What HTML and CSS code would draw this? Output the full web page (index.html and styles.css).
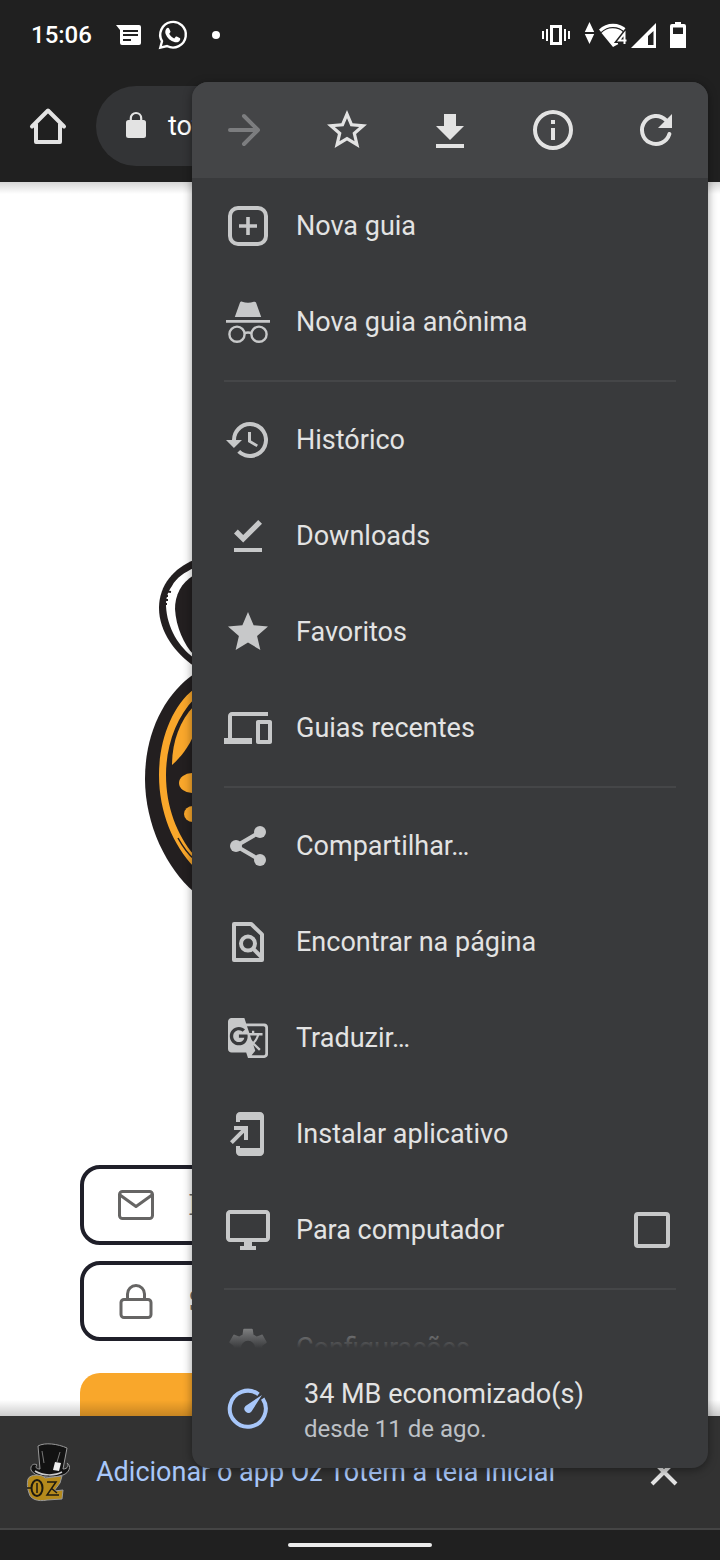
FILE: index.html
```html
<!DOCTYPE html>
<html lang="pt-BR">
<head>
<meta charset="utf-8">
<meta name="viewport" content="width=device-width, initial-scale=1">
<title>Oz Totem</title>
<link rel="stylesheet" href="styles.css">
</head>
<body>
<div class="screen">
  <header class="top">
    <div class="status">
      <span class="clock">15:06</span>
      <svg class="ic-msg" width="28" height="24" viewBox="0 0 28 24"><path fill="#fff" d="M0 2h23a2 2 0 0 1 2 2v16a2 2 0 0 1-2 2H6a2 2 0 0 1-2-2V7z"/><path stroke="#202020" stroke-width="2" d="M7 8h15M7 12h15M7 17h8"/></svg>
      <svg class="ic-wa" width="32" height="32" viewBox="0 0 32 32"><path fill="none" stroke="#fff" stroke-width="2.4" d="M3.3 28.7 5 22.2A12.8 12.8 0 1 1 10 27z"/><path fill="#fff" d="M9.500 9.500c.8-.9 2.200-.9 2.700.2l1.200 2.600c.2.600 0 1-.4 1.500l-.8 1c1.200 2.200 2.700 3.500 5 4.600l1.300-1.500c.3-.4.8-.5 1.300-.3l2.800 1.300c.7.400.8 1 .5 1.800-.8 2.300-3 3-5.100 2.500-4.700-1.200-7.900-4.300-9.400-8.300-.7-2-.3-4 .9-5.400z"/></svg>
      <span class="dot"></span>
      <span class="grow"></span>
      <svg class="ic-vib" width="28" height="20" viewBox="0 0 28 20"><path fill="none" stroke="#fff" stroke-width="3" d="M9.500 1.500h9v17h-9z"/><path stroke="#fff" stroke-width="2" d="M1 6v8M5 4v12M23 4v12M27 6v8"/></svg>
      <svg class="ic-net" width="72" height="28" viewBox="0 0 72 28"><g fill="#fff"><path d="M5.500 1l4.700 10H.8zM5.500 23l4.700-10H.8z"/><path d="M15 8.500a20 20 0 0 1 28 0l-2 2.600a16.500 16.500 0 0 0-24 0z"/><path d="M17.500 12a16 16 0 0 1 22-.6L34 19v4h.5L29 26z"/><path fill-rule="evenodd" d="M72 2v25H47zM69.500 10L64 15v9h5.500z"/></g><path fill="none" stroke="#202020" stroke-width="5" d="M40.500 23V12.500L35 19.500h7.500"/><path fill="none" stroke="#fff" stroke-width="2" d="M40.500 23V12.500L35 19.500h7.500"/></svg>
      <svg class="ic-bat" width="16" height="26" viewBox="0 0 16 26"><path fill="#fff" fill-rule="evenodd" d="M5 0h6v2h3a2 2 0 0 1 2 2v22H0V4a2 2 0 0 1 2-2h3zM3 5.500v6.500h10V5.500z"/></svg>
    </div>
    <div class="toolbar">
      <button class="home" aria-label="Página inicial"><svg width="40" height="40" viewBox="0 0 40 40"><path fill="none" stroke="#e3e3e3" stroke-width="4" stroke-linecap="round" stroke-linejoin="round" d="M4 20.500 20 4.500l16 16M8 18v18h24V18"/></svg></button>
      <div class="omnibox">
        <svg width="24" height="30" viewBox="0 0 24 30"><rect x="2" y="9" width="20" height="18" rx="2.500" fill="#e3e3e3"/><path fill="none" stroke="#e3e3e3" stroke-width="2.200" d="M6.800 10V7.200a5.200 5.200 0 0 1 10.400 0V10"/></svg>
        <span>totem.oz.com.br</span>
      </div>
    </div>
  </header>

  <main class="page">
    <svg class="brand" width="430" height="336" viewBox="145 558 430 336">
      <path fill="#231f20" d="M194 560c-20 8-35 25-35 48 0 24 17 46 35 58z"/>
      <path fill="#fff" d="M194 568c-9 4-18 10-22 18-5 7-6 13-6 20 1 22 13 41 28 52z"/>
      <path stroke="#231f20" stroke-width="2" d="M164 591l7 1M164 596h4M163 600h5M163 604h4"/>
      <path fill="#231f20" d="M194 575c-13 8-19 20-19 34 1 18 9 36 19 46z"/>
      <path fill="#231f20" d="M194 674c-29 20-49 58-49 105 0 46 22 90 49 113h40V674z"/>
      <path fill="#f9a72b" d="M194 689c-23 18-35 53-35 86 0 37 14 70 35 92v-12c-17-20-28-48-28-80 0-29 10-57 28-76z"/>
      <path fill="none" stroke="#231f20" stroke-width="1.500" d="M178 838c5 9 10 16 16 21"/>
      <path fill="#f9a72b" d="M194 706c-14 14-22 36-22 59 8-7 17-18 22-31z"/>
      <ellipse cx="192" cy="783" rx="13" ry="10" fill="#f9a72b"/>
      <ellipse cx="193" cy="814" rx="9" ry="8" fill="#f9a72b"/>
    </svg>
    <form class="login">
      <label class="field">
        <svg width="48" height="48" viewBox="0 0 48 48"><g fill="none" stroke="#666564" stroke-width="3" stroke-linejoin="round"><rect x="7.500" y="10.500" width="33" height="27" rx="3"/><path d="M8 14l16 11.500L40 14"/></g></svg>
        <input type="email" placeholder="E-mail" aria-label="E-mail">
      </label>
      <label class="field">
        <svg width="48" height="48" viewBox="0 0 48 48"><g fill="none" stroke="#666564" stroke-width="3"><rect x="9" y="22.500" width="30" height="18" rx="3"/><path d="M15.500 22v-5a8.500 8.500 0 0 1 17 0v5"/></g></svg>
        <input type="password" placeholder="Senha" aria-label="Senha">
      </label>
      <button type="button" class="submit" aria-label="Entrar"></button>
    </form>
  </main>

  <aside class="banner">
    <svg class="app" width="48" height="60" viewBox="0 0 48 60">
      <path fill="#121212" stroke="#999" d="M14 4c7-4 20-2 29 2l-4 21c5 0 6-4 4-6 5 3 2 10-4 12-12 4-29 2-32-5-1-5 3-7 6-5-2 2-1 4 3 4z"/>
      <path stroke="#777" fill="none" d="M18 9l2 12M36 10l-3 10"/>
      <path stroke="#ccc" stroke-width="1.500" fill="none" d="M11 29c8 5 20 5 27 1"/>
      <path fill="#eee" d="M31 20l6 1-2 8-6-1z"/>
      <path fill="#b58a1c" stroke="#999" d="M4 37c2-5 14-5 17-1l17-2-2 7-6 8 9-1-1 9-15 1c-9 2-17-1-18-7-2-5-2-10-1-14z"/>
      <ellipse cx="13" cy="46" rx="5.500" ry="8" fill="none" stroke="#1d1a10" stroke-width="2"/>
      <path d="M13 41v10M3 46h4M23 40h9l-9 13h12M27 46l6 5" fill="none" stroke="#1d1a10" stroke-width="1.500"/>
    </svg>
    <a href="#" class="install">Adicionar o app Oz Totem à tela inicial</a>
    <button class="close" aria-label="Fechar"><svg width="32" height="32" viewBox="0 0 32 32"><path stroke="#e3e3e3" stroke-width="4" d="M4 4l24 24M28 4 4 28"/></svg></button>
  </aside>
  <footer class="gesture"><span></span></footer>

  <div class="menu">
    <div class="actions">
      <button class="off" disabled aria-label="Avançar"><svg class="i" viewBox="0 0 24 24"><path class="line" d="M5 12h14M12 5l7 7-7 7"/></svg></button>
      <button aria-label="Favoritar"><svg class="i" viewBox="0 0 24 24"><path d="M22 9.240l-7.190-.620L12 2 9.190 8.630 2 9.240l5.460 4.730L5.820 21 12 17.270 18.180 21l-1.630-7.030zM12 15.400l-3.760 2.270 1-4.280-3.320-2.880 4.380-.380L12 6.100l1.710 4.040 4.380.380-3.320 2.880 1 4.280z"/></svg></button>
      <button aria-label="Baixar"><svg class="i" viewBox="0 0 24 24"><path d="M19 10h-4V4H9v6H5l7 7zM5 19v2h14v-2z"/></svg></button>
      <button aria-label="Informações"><svg class="i" viewBox="0 0 24 24"><path d="M11 7h2v2h-2zm0 4h2v6h-2zm1-9a10 10 0 1 0 0 20 10 10 0 0 0 0-20zm0 18a8 8 0 1 1 0-16 8 8 0 0 1 0 16z"/></svg></button>
      <button aria-label="Recarregar"><svg class="i" viewBox="0 0 24 24"><path class="line" d="M16.950 7.050A7 7 0 1 0 18.700 14"/><path d="M20 4v7h-7z"/></svg></button>
    </div>
    <div class="list">
      <button class="item"><svg class="i" viewBox="0 0 24 24"><rect class="line" x="3" y="3" width="18" height="18" rx="4"/><path d="M11.100 7.500h1.800v3.600h3.600v1.800h-3.600v3.600h-1.800v-3.600H7.500v-1.800h3.600z"/></svg>Nova guia</button>
      <button class="item"><svg class="i" viewBox="0 0 24 24"><path d="M8 2.300c.2-.5.700-.6 1.100-.4 1.900.6 3.900.6 5.800 0 .5-.2.900 0 1.100.4L18.600 9.500H5.400zM1 11h22v1.400H1z"/><g fill="none" stroke="currentColor" stroke-width="1.200"><circle cx="6.500" cy="18.100" r="3.800"/><circle cx="17.500" cy="18.100" r="3.800"/><path d="M10.200 17.600q1.800-.7 3.600 0"/></g></svg>Nova guia anônima</button>
      <hr>
      <button class="item"><svg class="i" viewBox="0 0 24 24"><path d="M13 3a9 9 0 0 0-9 9H1l3.960 4.030L9 12H6a7 7 0 1 1 2.060 4.940l-1.420 1.420A9 9 0 1 0 13 3zm-1 5v5l4.280 2.540.72-1.210-3.500-2.080V8z"/></svg>Histórico</button>
      <button class="item"><svg class="i" viewBox="0 0 24 24"><path d="M9.600 15.300 5 10.700l1.900-1.900 2.700 2.700L17.100 4 19 5.900zM5 18h14v2H5z"/></svg>Downloads</button>
      <button class="item"><svg class="i" viewBox="0 0 24 24"><path d="M12 17.270 18.180 21l-1.640-7.030L22 9.240l-7.190-.610L12 2 9.190 8.630 2 9.240l5.460 4.730L5.820 21z"/></svg>Favoritos</button>
      <button class="item"><svg class="i" viewBox="0 0 24 24"><path d="M4 6h18V4H4c-1.100 0-2 .9-2 2v11H0v3h14v-3H4V6zm19 2h-6c-.55 0-1 .45-1 1v10c0 .55.45 1 1 1h6c.55 0 1-.45 1-1V9c0-.55-.45-1-1-1zm-1 10h-4v-8h4v8z"/></svg>Guias recentes</button>
      <hr>
      <button class="item"><svg class="i" viewBox="0 0 24 24"><path d="M6 12 18 5M6 12l12 7" stroke="currentColor" stroke-width="2"/><circle cx="6" cy="12" r="3"/><circle cx="18" cy="5" r="3"/><circle cx="18" cy="19" r="3"/></svg>Compartilhar…</button>
      <button class="item"><svg class="i" viewBox="0 0 24 24"><path fill="none" stroke="currentColor" stroke-width="2" stroke-linejoin="round" d="M5 3h8.600L19 8.200V21H5z"/><circle cx="12" cy="12.800" r="3.500" fill="none" stroke="currentColor" stroke-width="2"/><path stroke="currentColor" stroke-width="2" d="M14.300 15.100l4.400 4.400"/></svg>Encontrar na página</button>
      <button class="item"><svg class="i" viewBox="-.1 -.1 26.400 26.400"><path transform="translate(1.100 1.100)" d="M21 4H11l-1-3H3c-1.100 0-2 .9-2 2v15c0 1.100.9 2 2 2h8l1 3h9c1.100 0 2-.9 2-2V6c0-1.100-.9-2-2-2zM7 16c-2.760 0-5-2.240-5-5s2.240-5 5-5c1.350 0 2.480.5 3.350 1.300L9.030 8.570c-.38-.36-1.040-.78-2.030-.78-1.740 0-3.150 1.440-3.150 3.210S5.260 14.210 7 14.210c2.010 0 2.840-1.440 2.920-2.410H7v-1.710h4.680c.07.31.12.61.12 1.020C11.800 13.970 9.890 16 7 16zm6.170-5.420h3.700c-.43 1.250-1.110 2.430-2.050 3.470-.31-.35-.6-.72-.86-1.100l-.79-2.370zm8.330 9.920c0 .55-.45 1-1 1H14l2-2.500-1.040-3.100 3.100 3.100.92-.92-3.300-3.250.02-.02c1.130-1.250 1.930-2.690 2.400-4.220H20v-1.300h-4.530V8h-1.290v1.290h-1.440L11.460 5.500h9.040c.55 0 1 .45 1 1v14z"/></svg>Traduzir…</button>
      <button class="item"><svg class="i" viewBox="0 0 24 24"><path d="M18 1H8C6.900 1 6 1.900 6 3v3h2V5h10v14H8v-1H6v3c0 1.100.9 2 2 2h10c1.100 0 2-.9 2-2V3c0-1.100-.9-2-2-2zM10 15h2V8H5v2h3.590L3 15.590 4.410 17 10 11.410z"/></svg>Instalar aplicativo</button>
      <label class="item"><svg class="i" viewBox="0 0 24 24"><path d="M21 2H3c-1.100 0-2 .9-2 2v12c0 1.100.9 2 2 2h7v2H8v2h8v-2h-2v-2h7c1.100 0 2-.9 2-2V4c0-1.100-.9-2-2-2zm0 14H3V4h18v12z"/></svg>Para computador<input type="checkbox" class="check"></label>
      <hr>
      <button class="item"><svg class="i" viewBox="0 0 24 24"><path d="M19.140 12.940c.04-.3.060-.61.060-.94 0-.32-.02-.64-.07-.94l2.030-1.580c.18-.14.230-.41.120-.61l-1.920-3.320c-.12-.22-.37-.29-.59-.22l-2.390.96c-.5-.38-1.030-.7-1.620-.94L14.400 2.810c-.04-.24-.24-.41-.48-.41h-3.840c-.24 0-.43.170-.47.410L9.250 5.350c-.59.240-1.130.57-1.620.94l-2.390-.96c-.22-.08-.47 0-.59.220L2.740 8.870c-.12.210-.08.470.12.610l2.030 1.580c-.05.3-.09.630-.09.940s.02.640.07.940l-2.030 1.580c-.18.140-.23.410-.12.610l1.920 3.320c.12.220.37.290.59.220l2.390-.96c.5.380 1.030.7 1.620.94l.36 2.540c.05.240.24.410.48.410h3.840c.24 0 .44-.17.47-.41l.36-2.540c.59-.24 1.130-.56 1.620-.94l2.390.96c.22.080.47 0 .59-.22l1.920-3.320c.12-.22.070-.47-.12-.61zM12 15.600a3.600 3.600 0 1 1 0-7.200 3.600 3.600 0 0 1 0 7.200z"/></svg>Configurações</button>
    </div>
    <button class="saver">
      <svg class="i" viewBox="0 0 48 48"><path fill="none" stroke="currentColor" stroke-width="4" d="M34.500 9.300A18 18 0 1 0 38.700 13.700"/><path d="M38 10 27.500 26.500a4 4 0 1 1-6-5.500z"/></svg>
      <span class="texts"><span>34 MB economizado(s)</span><small>desde 11 de ago.</small></span>
    </button>
  </div>
</div>
</body>
</html>
```
FILE: styles.css
```css
* { box-sizing: border-box; }
body { margin: 0; font-family: Roboto, sans-serif; font-size: 27px; color: #e3e3e3; background: #202020; }
button { font: inherit; color: inherit; background: none; border: 0; padding: 0; margin: 0; text-align: left; }
svg { display: block; flex: none; }

.screen { position: relative; display: flex; flex-direction: column; height: 100vh; min-height: 1200px; overflow: hidden; }

.top { background: #202020; flex: none; }
.status { display: flex; align-items: center; height: 70px; padding: 0 34px 0 31px; }
.clock { font-size: 24px; font-weight: 500; color: #fff; }
.ic-msg { margin-left: 24px; }
.ic-wa { margin-left: 13px; }
.dot { width: 8px; height: 8px; margin-left: 23px; border-radius: 50%; background: #fff; }
.grow { flex: 1; }
.ic-net { margin-left: 14px; }
.ic-bat { margin-left: 14px; }
.toolbar { display: flex; align-items: center; height: 112px; padding-left: 28px; gap: 28px; }
.omnibox { display: flex; align-items: center; gap: 20px; flex: 1; height: 80px; padding-left: 28px; margin-right: 112px; border-radius: 40px; background: #333436; color: #fff; }

.page { position: relative; flex: 1; min-height: 0; overflow: hidden; background: #fff; }
.page::before, .page::after { content: ""; position: absolute; left: 0; right: 0; }
.page::before { top: 0; height: 12px; background: linear-gradient(rgba(0,0,0,.16), transparent); }
.page::after { bottom: 0; height: 16px; background: linear-gradient(transparent, rgba(0,0,0,.2)); }
.brand { margin: 376px auto 0; }
.login { display: flex; flex-direction: column; gap: 16px; margin: 271px 80px 0; }
.field { display: flex; align-items: center; gap: 28px; height: 80px; padding: 0 28px; border: 4px solid #1f1f29; border-radius: 20px; }
.field input { flex: 1; min-width: 0; border: 0; padding: 0; background: none; font-family: "DejaVu Serif", serif; font-size: 28px; outline: 0; }
.field input::placeholder { color: #666564; opacity: 1; }
.submit { height: 80px; margin-top: 16px; border-radius: 20px; background: #f9a72b; }

.banner { display: flex; align-items: center; flex: none; height: 112px; padding: 0 40px 0 24px; background: #323232; }
.install { flex: 1; margin-left: 24px; color: #a8c7fa; text-decoration: none; white-space: nowrap; }
.gesture { display: flex; justify-content: center; align-items: center; flex: none; height: 32px; border-top: 2px solid #454545; background: #202020; }
.gesture span { width: 20%; height: 4px; border-radius: 2px; background: #ececec; }

.menu { position: absolute; top: 82px; right: 12px; bottom: 92px; width: 516px; display: flex; flex-direction: column; overflow: hidden; border-radius: 16px; background: #393a3c; box-shadow: 0 2px 10px rgba(0,0,0,.4); }
.actions { display: grid; grid-template-columns: repeat(5, 1fr); flex: none; height: 96px; background: #444547; }
.actions button { display: flex; align-items: center; justify-content: center; }
.actions .off { color: #7c7d7f; }
.i { width: 48px; height: 48px; fill: currentColor; }
.line { fill: none; stroke: currentColor; stroke-width: 2; stroke-linecap: round; stroke-linejoin: round; }
.list { position: relative; flex: 1; min-height: 0; overflow: hidden; }
.list::after { content: ""; position: absolute; left: 0; right: 0; bottom: 0; height: 32px; background: linear-gradient(rgba(57,58,60,.2), #393a3c); }
.item { display: flex; align-items: center; gap: 24px; width: 100%; height: 96px; padding: 0 32px; white-space: nowrap; }
.item .i { color: #c7c8c9; }
.list hr { height: 2px; margin: 10px 32px; border: 0; background: #454648; }
.check { appearance: none; width: 36px; height: 36px; margin: 0 6px 0 auto; border: 4px solid #c7c8c9; border-radius: 4px; }
.saver { display: flex; align-items: center; gap: 32px; flex: none; height: 120px; padding: 2px 32px 0; }
.saver .i { color: #a8c7fa; }
.texts { display: flex; flex-direction: column; padding-top: 4px; }
.texts span { line-height: 36px; }
.texts small { font-size: 24px; line-height: 34px; color: #bdc1c6; }
```
